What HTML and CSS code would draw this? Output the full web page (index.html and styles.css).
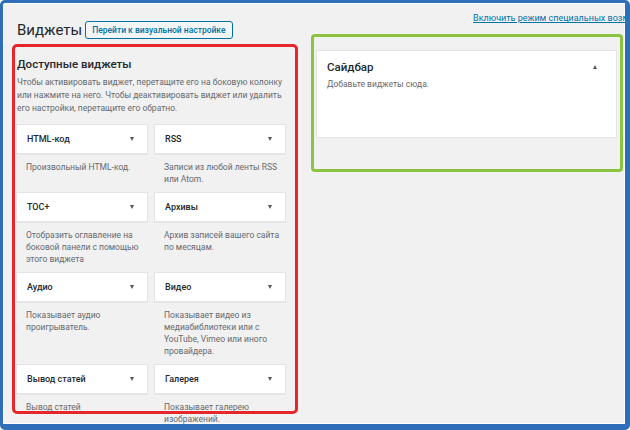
FILE: index.html
```html
<!DOCTYPE html>
<html lang="ru">

<head>
    <meta charset="UTF-8">
    <title>Виджеты</title>
    <link rel="stylesheet" href="styles.css">
</head>

<body>

    <div class="frame">
        <div class="page">
            <div class="col-left">
                <div class="header">
                    <h1>Виджеты</h1>
                    <a class="btn" href="#">Перейти к визуальной настройке</a>
                </div>

                <div class="available">
                    <h2>Доступные виджеты</h2>
                    <p class="intro">Чтобы активировать виджет, перетащите его на боковую колонку или нажмите на него. Чтобы деактивировать виджет или удалить его настройки, перетащите его обратно.</p>

                    <div class="widget-grid">
                        <div class="widget">
                            <div class="widget-top"><span>HTML-код</span><i class="arrow-down"></i></div>
                            <div class="widget-desc">Произвольный HTML-код.</div>
                        </div>
                        <div class="widget">
                            <div class="widget-top"><span>RSS</span><i class="arrow-down"></i></div>
                            <div class="widget-desc">Записи из любой ленты RSS или Atom.</div>
                        </div>
                        <div class="widget">
                            <div class="widget-top"><span>TOC+</span><i class="arrow-down"></i></div>
                            <div class="widget-desc">Отобразить оглавление на боковой панели с помощью этого виджета</div>
                        </div>
                        <div class="widget">
                            <div class="widget-top"><span>Архивы</span><i class="arrow-down"></i></div>
                            <div class="widget-desc">Архив записей вашего сайта по месяцам.</div>
                        </div>
                        <div class="widget">
                            <div class="widget-top"><span>Аудио</span><i class="arrow-down"></i></div>
                            <div class="widget-desc">Показывает аудио проигрыватель.</div>
                        </div>
                        <div class="widget">
                            <div class="widget-top"><span>Видео</span><i class="arrow-down"></i></div>
                            <div class="widget-desc">Показывает видео из медиабиблиотеки или с YouTube, Vimeo или иного провайдера.</div>
                        </div>
                        <div class="widget">
                            <div class="widget-top"><span>Вывод статей</span><i class="arrow-down"></i></div>
                            <div class="widget-desc">Вывод статей</div>
                        </div>
                        <div class="widget">
                            <div class="widget-top"><span>Галерея</span><i class="arrow-down"></i></div>
                            <div class="widget-desc">Показывает галерею изображений.</div>
                        </div>
                    </div>
                </div>
            </div>

            <div class="col-right">
                <div class="access"><a href="#">Включить режим специальных возможностей</a></div>
                <div class="sidebars">
                    <div class="sidebar">
                        <div class="sidebar-head">
                            <h3>Сайдбар</h3>
                            <i class="arrow-up"></i>
                        </div>
                        <p>Добавьте виджеты сюда.</p>
                    </div>
                </div>
            </div>
        </div>
    </div>

</body>

</html>
```

FILE: styles.css
```css
body {
    margin: 0;
    font-family: Roboto, 'Noto Sans', sans-serif;
    color: #23282d;
}

.frame {
    width: 630px;
    height: 430px;
    box-sizing: border-box;
    border: 3px solid #2f6fba;
    border-right-width: 5px;
    border-bottom-width: 6px;
    border-radius: 5px;
    background: #f1f1f1;
    box-shadow: inset 0 0 0 1px #fff;
    overflow: hidden;
}

.page {
    display: flex;
    gap: 13px;
    padding: 6px 0 0 9px;
}

/* left column */

.col-left {
    width: 286px;
    flex-shrink: 0;
}

.header {
    display: flex;
    align-items: center;
    gap: 3px;
    height: 20px;
    margin: 11px 0 4px 5px;
}

h1 {
    margin: 0;
    font-size: 15px;
    font-weight: 400;
    line-height: 20px;
}

.btn {
    display: flex;
    align-items: center;
    height: 18px;
    box-sizing: border-box;
    padding: 0 6px;
    border: 1px solid #0071a1;
    border-radius: 3px;
    background: #f3f5f6;
    color: #0071a1;
    font-size: 8.5px;
    font-weight: 500;
    text-decoration: none;
}

.available {
    height: 370px;
    box-sizing: border-box;
    border: 3px solid #e5262b;
    border-radius: 5px;
    padding: 8px 9px 0 1px;
}

h2 {
    margin: 0 0 3px 1px;
    font-size: 11.5px;
    font-weight: 500;
    line-height: 18px;
}

.intro {
    margin: 0 0 9px 1px;
    font-size: 8.5px;
    line-height: 13px;
    color: #646970;
}

.widget-grid {
    display: grid;
    grid-template-columns: 132px 132px;
    column-gap: 6px;
}

.widget-top {
    display: flex;
    align-items: center;
    justify-content: space-between;
    height: 30px;
    box-sizing: border-box;
    padding: 0 13px 0 10px;
    background: #fff;
    border: 1px solid #e2e4e7;
    box-shadow: 0 1px 1px rgba(0, 0, 0, 0.04);
    font-size: 9px;
    font-weight: 500;
}

.arrow-down {
    border-left: 2.5px solid transparent;
    border-right: 2.5px solid transparent;
    border-top: 4px solid #50575e;
}

.widget-desc {
    padding: 7px 2px 7px 10px;
    font-size: 8.5px;
    line-height: 12px;
    color: #646970;
}

/* right column */

.col-right {
    width: 312px;
    flex-shrink: 0;
}

.access {
    margin: 3px -47px 0 0;
    text-align: right;
    white-space: nowrap;
    font-size: 9px;
    line-height: 12px;
}

.access a {
    color: #0073aa;
}

.sidebars {
    height: 138px;
    box-sizing: border-box;
    margin-top: 10px;
    border: 3px solid #8dc43f;
    border-radius: 4px;
    padding: 13px 3px 0 2px;
}

.sidebar {
    height: 88px;
    box-sizing: border-box;
    background: #fff;
    border: 1px solid #e2e4e7;
    padding: 7px 19px 0 10px;
}

.sidebar-head {
    display: flex;
    align-items: center;
    justify-content: space-between;
}

h3 {
    margin: 0;
    font-size: 11.5px;
    font-weight: 500;
    line-height: 18px;
}

.arrow-up {
    border-left: 2.5px solid transparent;
    border-right: 2.5px solid transparent;
    border-bottom: 4px solid #50575e;
}

.sidebar p {
    margin: 2px 0 0;
    font-size: 8.5px;
    line-height: 12px;
    color: #646970;
}
```
